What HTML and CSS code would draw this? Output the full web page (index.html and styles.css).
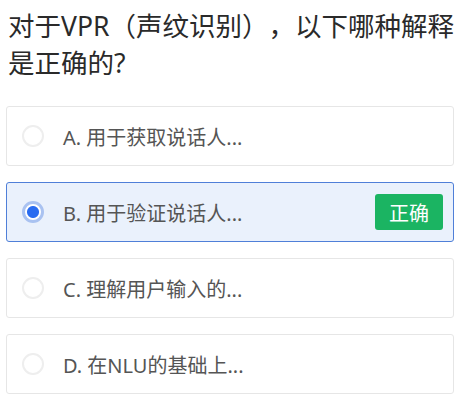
FILE: index.html
```html
<!DOCTYPE html>
<html lang="zh">
<head>
<meta charset="utf-8">
<link rel="stylesheet" href="styles.css">
</head>
<body>
<div class="page">
  <h1 class="question">对于VPR（声纹识别）<span class="punct">，</span>以下哪种解释是正确的?</h1>
  <ul class="options">
    <li class="option">
      <span class="radio"></span>
      <span class="label">A. 用于获取说话人...</span>
    </li>
    <li class="option selected">
      <span class="radio"></span>
      <span class="label">B. 用于验证说话人...</span>
      <span class="badge">正确</span>
    </li>
    <li class="option">
      <span class="radio"></span>
      <span class="label">C. 理解用户输入的...</span>
    </li>
    <li class="option">
      <span class="radio"></span>
      <span class="label">D. 在NLU的基础上...</span>
    </li>
  </ul>
</div>
</body>
</html>
```
FILE: styles.css
```css
html, body {
  margin: 0;
  padding: 0;
  background: #ffffff;
}
.page {
  width: 464px;
  padding: 6px 10px 0 6px;
  box-sizing: border-box;
  font-family: "Noto Sans", "Noto Sans CJK SC", sans-serif;
  text-spacing-trim: space-all;
}
.question {
  margin: 0 0 0 2px;
  font-size: 26.5px;
  line-height: 37px;
  font-weight: 400;
  color: #2a2a2a;
  text-spacing-trim: space-all;
}
.punct {
  font-family: "Noto Sans CJK TC", sans-serif;
}
.options {
  list-style: none;
  margin: 24px 0 0 0;
  padding: 0;
  display: flex;
  flex-direction: column;
  gap: 16px;
}
.option {
  height: 60px;
  box-sizing: border-box;
  border: 1px solid #e6e6e6;
  border-radius: 3px;
  background: #ffffff;
  display: flex;
  align-items: center;
  padding: 0 10px 0 15px;
}
.option.selected {
  background: #eaf1fc;
  border: 1.5px solid #4f7fd8;
}
.radio {
  width: 22px;
  height: 22px;
  box-sizing: border-box;
  border-radius: 50%;
  border: 2px solid #eeeeee;
  background: #ffffff;
  flex: none;
}
.selected .radio {
  border: 3px solid #a9c2f1;
  background: radial-gradient(circle, #2a6cf0 0 5.5px, #ffffff 6.5px);
}
.label {
  margin-left: 19px;
  font-size: 20px;
  color: #555555;
  flex: 1;
}
.badge {
  width: 68px;
  height: 36px;
  border-radius: 3px;
  background: #1bb462;
  color: #ffffff;
  font-size: 20px;
  display: flex;
  align-items: center;
  justify-content: center;
}
```
